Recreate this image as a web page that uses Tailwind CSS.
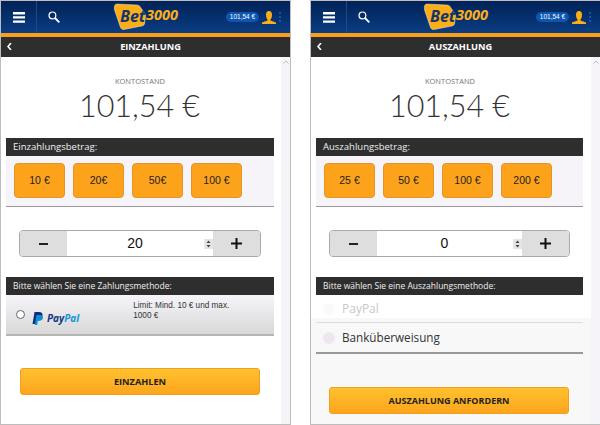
<!DOCTYPE html>
<html lang="de">
<head>
  <meta charset="UTF-8" />
  <title>Bet3000</title>
  <script src="https://cdn.jsdelivr.net/npm/@tailwindcss/browser@4"></script>
</head>
<body class="bg-white w-[600px] h-[425px] overflow-hidden font-['Liberation_Sans',sans-serif]">
  <div class="flex justify-between w-[600px] h-[425px]">

    <!-- Einzahlung -->
    <div class="w-[291px] h-[425px] border border-[#bdbdbd] flex flex-col overflow-hidden">
      <div class="h-[32px] shrink-0 flex items-center relative bg-gradient-to-b from-[#022258] to-[#0b3d82]">
        <div class="w-[36px] h-full flex items-center justify-center border-r border-[#1b4a8c]">
          <svg width="12" height="11" viewBox="0 0 12 11"><path d="M0 0h12v2.400H0zM0 4.200h12v2.400H0zM0 8.400h12v2.400H0z" fill="#fff"/></svg>
        </div>
        <svg class="ml-[11px]" width="12" height="12" viewBox="0 0 12 12"><circle cx="4.400" cy="4.400" r="3.400" fill="none" stroke="#fff" stroke-width="1.200"/><path d="M7 7l4.300 4.300" stroke="#fff" stroke-width="1.800"/></svg>
        <div class="absolute left-[112px] top-[1px] w-[68px] h-[30px]">
          <svg class="absolute left-0 top-0" width="34" height="30" viewBox="0 0 34 30"><path d="M4 2 24 3Q26 3 27 4.500L32 12Q33 13.500 32.500 15L31.500 22Q31 23.500 29 24L11 27.500Q8.500 28 7.500 25.500L1.500 8Q.5 2 4 2Z" fill="#fcae17" stroke="#fff" stroke-width=".4"/></svg>
          <span class="absolute left-[7px] top-[4px] text-[16px] leading-[20px] font-bold italic text-[#12346f] font-['Open_Sans',sans-serif]">Bet</span>
          <span class="absolute left-[33px] top-[3px] text-[14.500px] leading-[20px] font-bold italic text-[#fcae17] font-['Open_Sans',sans-serif]">3000</span>
        </div>
        <div class="ml-auto mr-[9px] flex items-center gap-[3px]">
          <span class="w-[33px] h-[10px] rounded-full bg-[#0d56b0] text-white text-[6.500px] leading-[10px] text-center">101,54 €</span>
          <svg width="14" height="13" viewBox="0 0 14 13"><path d="M7 0q3 0 3 4 0 3-1.500 4.500V9.500L14 11.500V13H0v-1.500L5.500 9.500V8.500Q4 7 4 4q0-4 3-4z" fill="#fcae17"/></svg>
          <span class="flex flex-col gap-[2px]"><i class="w-[2px] h-[2px] bg-[#0d56b0]"></i><i class="w-[2px] h-[2px] bg-[#0d56b0]"></i><i class="w-[2px] h-[2px] bg-[#0d56b0]"></i></span>
        </div>
      </div>
      <div class="h-[4px] shrink-0 bg-[#f99f1c]"></div>
      <div class="h-[20px] shrink-0 bg-[#2e2e2e] flex items-center relative">
        <svg class="absolute left-[6px] top-[6px]" width="5" height="7" viewBox="0 0 5 7"><path d="M4 0 1 3.500 4 7" fill="none" stroke="#fff" stroke-width="1.600"/></svg>
        <span class="w-full pl-[10px] text-center text-white text-[9.200px] font-bold font-['Open_Sans',sans-serif]">EINZAHLUNG</span>
      </div>
      <div class="flex flex-1 min-h-0">
        <div class="w-[280px] flex flex-col">
          <p class="mt-[20px] pr-[2px] text-center text-[7.500px] leading-[8px] text-[#777] font-['Open_Sans',sans-serif]">KONTOSTAND</p>
          <p class="-mt-[1px] pr-[3px] text-center text-[30.500px] leading-[43px] font-light text-[#333] font-['Lato',sans-serif]">101,54 €</p>
          <div class="mt-[11px] ml-[5px] mr-[7px] flex flex-col">
            <div class="h-[18px] bg-[#2e2e2e] px-[7px] text-[9.500px] leading-[18px] text-[#eee] font-['Open_Sans',sans-serif]">Einzahlungsbetrag:</div>
            <div class="h-[51px] bg-[#f6f4f9] border-b border-[#999] flex gap-[8px] pl-[8px] pt-[7px]">
              <button class="w-[51px] h-[35px] rounded-[4px] bg-[#fda21b] border border-[#e0962a] text-[10.500px] text-[#222]">10 €</button>
              <button class="w-[51px] h-[35px] rounded-[4px] bg-[#fda21b] border border-[#e0962a] text-[10.500px] text-[#222]">20€</button>
              <button class="w-[51px] h-[35px] rounded-[4px] bg-[#fda21b] border border-[#e0962a] text-[10.500px] text-[#222]">50€</button>
              <button class="w-[51px] h-[35px] rounded-[4px] bg-[#fda21b] border border-[#e0962a] text-[10.500px] text-[#222]">100 €</button>
            </div>
            <div class="mt-[23px] mx-[13px] h-[27px] rounded-[4px] border border-[#aaa] flex overflow-hidden">
              <span class="w-[47px] bg-[#dedede] flex items-center justify-center"><i class="w-[9px] h-[2px] bg-[#222]"></i></span>
              <span class="flex-1 bg-white pr-[10px] text-center text-[14px] leading-[25px] text-[#111] relative">20
                <span class="absolute right-0 top-[8px] w-[9px] h-[10px] bg-[#e4e4e4]">
                  <svg width="9" height="10" viewBox="0 0 9 10"><path d="M4.500 1.500 6.500 4h-4zM4.500 8.500 6.500 6h-4z" fill="#444"/></svg>
                </span>
              </span>
              <span class="w-[47px] bg-[#dedede] flex items-center justify-center">
                <svg width="11" height="11" viewBox="0 0 11 11"><path d="M4.500 0h2v4.500H11v2H6.500V11h-2V6.500H0v-2h4.500z" fill="#111"/></svg>
              </span>
            </div>
            <div class="mt-[20px] h-[18px] bg-[#2e2e2e] px-[7px] text-[8.500px] leading-[18px] text-[#eee] font-['Open_Sans',sans-serif]">Bitte wählen Sie eine Zahlungsmethode:</div>
            <div class="h-[41px] flex bg-gradient-to-b from-[#f6f4f8] to-[#d8d8d8] border-b-2 border-[#b5b5b5]">
              <span class="ml-[10px] mt-[15px] w-[9px] h-[9px] shrink-0 rounded-full bg-white border border-[#666]"></span>
              <span class="ml-[7px] mt-[15px] flex items-center h-[16px]">
                <svg width="12" height="13" viewBox="0 0 12 13"><path d="M2.500 0H7q4 0 3.500 3.500T6 7.500H4.500L3.800 12H.5z" fill="#0f2f7c"/><path d="M4.500 3H8q3 0 3 2.500T7 9H5.800l-.6 4H2.800z" fill="#0d8fd8"/></svg>
                <span class="ml-[3px] text-[10px] font-bold italic text-[#12387f] font-['Open_Sans',sans-serif]">Pay<span class="text-[#1596d8]">Pal</span></span>
              </span>
              <p class="ml-[54px] mt-[6px] w-[100px] text-[8.200px] leading-[10px] text-[#333]">Limit: Mind. 10 € und max. 1000 €</p>
            </div>
            <button class="mt-[32px] mx-[14px] h-[27px] rounded-[3px] border border-[#f0a020] bg-gradient-to-b from-[#ffc12e] to-[#fda51c] text-[9.200px] font-bold text-[#222] font-['Open_Sans',sans-serif]">EINZAHLEN</button>
          </div>
        </div>
        <div class="w-[9px] bg-[#f6f4f9] flex justify-center pt-[3px]">
          <svg width="6" height="4" viewBox="0 0 6 4"><path d="M.5 3.500 3 1l2.500 2.500" fill="none" stroke="#bbb"/></svg>
        </div>
      </div>
    </div>

    <!-- Auszahlung -->
    <div class="w-[290px] h-[425px] border-l border-b border-t border-[#bdbdbd] flex flex-col overflow-hidden">
      <div class="h-[32px] shrink-0 flex items-center relative bg-gradient-to-b from-[#022258] to-[#0b3d82]">
        <div class="w-[36px] h-full flex items-center justify-center border-r border-[#1b4a8c]">
          <svg width="12" height="11" viewBox="0 0 12 11"><path d="M0 0h12v2.400H0zM0 4.200h12v2.400H0zM0 8.400h12v2.400H0z" fill="#fff"/></svg>
        </div>
        <svg class="ml-[11px]" width="12" height="12" viewBox="0 0 12 12"><circle cx="4.400" cy="4.400" r="3.400" fill="none" stroke="#fff" stroke-width="1.200"/><path d="M7 7l4.300 4.300" stroke="#fff" stroke-width="1.800"/></svg>
        <div class="absolute left-[112px] top-[1px] w-[68px] h-[30px]">
          <svg class="absolute left-0 top-0" width="34" height="30" viewBox="0 0 34 30"><path d="M4 2 24 3Q26 3 27 4.500L32 12Q33 13.500 32.500 15L31.500 22Q31 23.500 29 24L11 27.500Q8.500 28 7.500 25.500L1.500 8Q.5 2 4 2Z" fill="#fcae17" stroke="#fff" stroke-width=".4"/></svg>
          <span class="absolute left-[7px] top-[4px] text-[16px] leading-[20px] font-bold italic text-[#12346f] font-['Open_Sans',sans-serif]">Bet</span>
          <span class="absolute left-[33px] top-[3px] text-[14.500px] leading-[20px] font-bold italic text-[#fcae17] font-['Open_Sans',sans-serif]">3000</span>
        </div>
        <div class="ml-auto mr-[9px] flex items-center gap-[3px]">
          <span class="w-[33px] h-[10px] rounded-full bg-[#0d56b0] text-white text-[6.500px] leading-[10px] text-center">101,54 €</span>
          <svg width="14" height="13" viewBox="0 0 14 13"><path d="M7 0q3 0 3 4 0 3-1.500 4.500V9.500L14 11.500V13H0v-1.500L5.500 9.500V8.500Q4 7 4 4q0-4 3-4z" fill="#fcae17"/></svg>
          <span class="flex flex-col gap-[2px]"><i class="w-[2px] h-[2px] bg-[#0d56b0]"></i><i class="w-[2px] h-[2px] bg-[#0d56b0]"></i><i class="w-[2px] h-[2px] bg-[#0d56b0]"></i></span>
        </div>
      </div>
      <div class="h-[4px] shrink-0 bg-[#f99f1c]"></div>
      <div class="h-[20px] shrink-0 bg-[#2e2e2e] flex items-center relative">
        <svg class="absolute left-[6px] top-[6px]" width="5" height="7" viewBox="0 0 5 7"><path d="M4 0 1 3.500 4 7" fill="none" stroke="#fff" stroke-width="1.600"/></svg>
        <span class="w-full pl-[10px] text-center text-white text-[9.200px] font-bold font-['Open_Sans',sans-serif]">AUSZAHLUNG</span>
      </div>
      <div class="flex flex-1 min-h-0">
        <div class="w-[280px] flex flex-col">
          <p class="mt-[20px] pr-[2px] text-center text-[7.500px] leading-[8px] text-[#777] font-['Open_Sans',sans-serif]">KONTOSTAND</p>
          <p class="-mt-[1px] pr-[3px] text-center text-[30.500px] leading-[43px] font-light text-[#333] font-['Lato',sans-serif]">101,54 €</p>
          <div class="mt-[11px] ml-[5px] mr-[8px] flex flex-col">
            <div class="h-[18px] bg-[#2e2e2e] px-[7px] text-[9.500px] leading-[18px] text-[#eee] font-['Open_Sans',sans-serif]">Auszahlungsbetrag:</div>
            <div class="h-[51px] bg-[#f6f4f9] border-b border-[#999] flex gap-[8px] pl-[8px] pt-[7px]">
              <button class="w-[51px] h-[35px] rounded-[4px] bg-[#fda21b] border border-[#e0962a] text-[10.500px] text-[#222]">25 €</button>
              <button class="w-[51px] h-[35px] rounded-[4px] bg-[#fda21b] border border-[#e0962a] text-[10.500px] text-[#222]">50 €</button>
              <button class="w-[51px] h-[35px] rounded-[4px] bg-[#fda21b] border border-[#e0962a] text-[10.500px] text-[#222]">100 €</button>
              <button class="w-[51px] h-[35px] rounded-[4px] bg-[#fda21b] border border-[#e0962a] text-[10.500px] text-[#222]">200 €</button>
            </div>
            <div class="mt-[23px] mx-[13px] h-[27px] rounded-[4px] border border-[#aaa] flex overflow-hidden">
              <span class="w-[47px] bg-[#dedede] flex items-center justify-center"><i class="w-[9px] h-[2px] bg-[#222]"></i></span>
              <span class="flex-1 bg-white pr-[10px] text-center text-[14px] leading-[25px] text-[#111] relative">0
                <span class="absolute right-0 top-[8px] w-[9px] h-[10px] bg-[#e4e4e4]">
                  <svg width="9" height="10" viewBox="0 0 9 10"><path d="M4.500 1.500 6.500 4h-4zM4.500 8.500 6.500 6h-4z" fill="#444"/></svg>
                </span>
              </span>
              <span class="w-[47px] bg-[#dedede] flex items-center justify-center">
                <svg width="11" height="11" viewBox="0 0 11 11"><path d="M4.500 0h2v4.500H11v2H6.500V11h-2V6.500H0v-2h4.500z" fill="#111"/></svg>
              </span>
            </div>
            <div class="mt-[20px] h-[18px] bg-[#2e2e2e] px-[7px] text-[8.500px] leading-[18px] text-[#eee] font-['Open_Sans',sans-serif]">Bitte wählen Sie eine Auszahlungsmethode:</div>
            <div class="h-[23px] flex items-center pl-[7px] pt-[5px] text-[12px] text-[#c8c8c8] font-['Open_Sans',sans-serif]">
              <span class="w-[12px] h-[12px] rounded-full bg-[#fafafa] mr-[7px]"></span>PayPal
            </div>
          </div>
          <!-- grey lower area runs the full width of the column -->
          <div class="flex-1 bg-[#f8f8f8] pl-[5px] pr-[8px] flex flex-col">
            <div class="h-[5px] border-b border-[#ddd]"></div>
            <div class="h-[31px] flex items-center border-b-2 border-[#999] pl-[7px] text-[11.700px] text-[#333] font-['Open_Sans',sans-serif]">
              <span class="w-[12px] h-[12px] rounded-full bg-[#ece8ee] mr-[7px]"></span>Banküberweisung
            </div>
            <button class="mt-[33px] ml-[13px] mr-[14px] h-[27px] rounded-[3px] border border-[#f0a020] bg-gradient-to-b from-[#ffc12e] to-[#fda51c] text-[9px] font-bold text-[#222] font-['Open_Sans',sans-serif]">AUSZAHLUNG ANFORDERN</button>
          </div>
        </div>
        <div class="w-[9px] bg-[#f6f4f9] flex justify-center pt-[3px]">
          <svg width="6" height="4" viewBox="0 0 6 4"><path d="M.5 3.500 3 1l2.500 2.500" fill="none" stroke="#bbb"/></svg>
        </div>
      </div>
    </div>

  </div>
</body>
</html>
